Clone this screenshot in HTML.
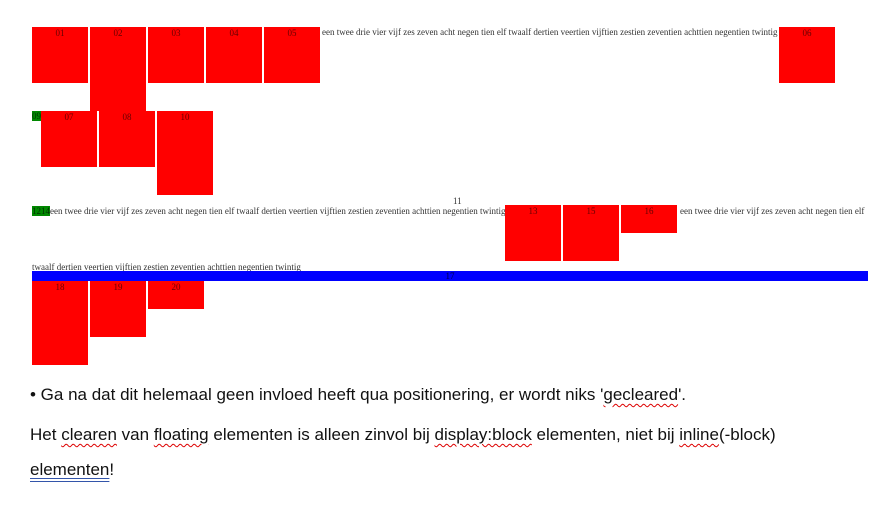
<!DOCTYPE html>
<html><head><meta charset="utf-8"><style>
body{margin:0;width:892px;height:523px;background:#fff;position:relative;overflow:hidden;font-family:"Liberation Serif",serif;color:#222}
.b{position:absolute;background:#f00;width:56px;font-size:9px;text-align:center;line-height:12px;color:#600}
.t{position:absolute;font-size:9px;line-height:10px;white-space:nowrap;color:#333}
.g{position:absolute;background:#080;font-size:9px;line-height:10px;color:#030}
.p{position:absolute;left:30px;font-family:"Liberation Sans",sans-serif;font-size:17px;line-height:20px;color:#111;white-space:nowrap}
.w{text-decoration:underline wavy #d00;text-decoration-thickness:1px;text-underline-offset:3px}
</style></head><body>
<div class="b" style="left:32px;top:27px;height:56px">01</div>
<div class="b" style="left:90px;top:27px;height:84px">02</div>
<div class="b" style="left:148px;top:27px;height:56px">03</div>
<div class="b" style="left:206px;top:27px;height:56px">04</div>
<div class="b" style="left:264px;top:27px;height:56px">05</div>
<div class="t" style="left:322px;top:27px">een twee drie vier vijf zes zeven acht negen tien elf twaalf dertien veertien vijftien zestien zeventien achttien negentien twintig</div>
<div class="b" style="left:779px;top:27px;height:56px">06</div>
<div class="g" style="left:32px;top:111px;width:9px">09</div>
<div class="b" style="left:41px;top:111px;height:56px">07</div>
<div class="b" style="left:99px;top:111px;height:56px">08</div>
<div class="b" style="left:157px;top:111px;height:84px">10</div>
<div class="t" style="left:453px;top:196px">11</div>
<div class="g" style="left:32px;top:206px;width:18px">1214</div>
<div class="t" style="left:50px;top:206px">een twee drie vier vijf zes zeven acht negen tien elf twaalf dertien veertien vijftien zestien zeventien achttien negentien twintig</div>
<div class="b" style="left:505px;top:205px;height:56px">13</div>
<div class="b" style="left:563px;top:205px;height:56px">15</div>
<div class="b" style="left:621px;top:205px;height:28px">16</div>
<div class="t" style="left:680px;top:206px">een twee drie vier vijf zes zeven acht negen tien elf</div>
<div class="t" style="left:32px;top:262px">twaalf dertien veertien vijftien zestien zeventien achttien negentien twintig</div>
<div style="position:absolute;left:32px;top:271px;width:836px;height:10px;background:#00f;font-size:9px;line-height:10px;text-align:center;color:#004">17</div>
<div class="b" style="left:32px;top:281px;height:84px">18</div>
<div class="b" style="left:90px;top:281px;height:56px">19</div>
<div class="b" style="left:148px;top:281px;height:28px">20</div>
<div class="p" style="top:385px">• Ga na dat dit helemaal geen invloed heeft qua positionering, er wordt niks '<span class="w">gecleared</span>'.</div>
<div class="p" style="top:425px">Het <span class="w">clearen</span> van <span class="w">floating</span> elementen is alleen zinvol bij <span class="w">display:block</span> elementen, niet bij <span class="w">inline</span>(-block)</div>
<div class="p" style="top:460px"><span style="text-decoration:underline double #35a;text-underline-offset:3px">elementen</span>!</div>
</body></html>
